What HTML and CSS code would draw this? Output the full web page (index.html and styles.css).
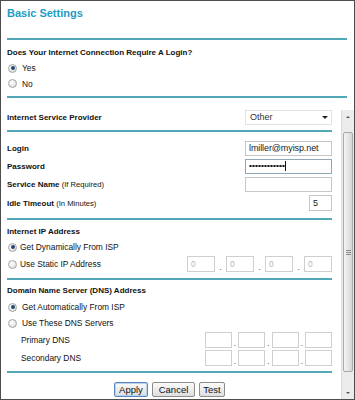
FILE: index.html
```html
<!DOCTYPE html>
<html lang="en">
<head>
    <meta charset="UTF-8">
    <meta name="viewport" content="width=device-width, initial-scale=1.0">
    <title>Basic Settings</title>
    <link rel="stylesheet" href="styles.css">
</head>
<body>
    <div class="frame">
        <div class="head">
            <h1 class="title">Basic Settings</h1>
            <div class="rule"></div>
            <div class="question">Does Your Internet Connection Require A Login?</div>
            <div class="opt opt-yes"><span class="radio on"></span>Yes</div>
            <div class="opt opt-no"><span class="radio"></span>No</div>
            <div class="rule rule-head"></div>
        </div>

        <div class="scroll">
            <div class="content">
                <div class="row row-isp">
                    <span class="label">Internet Service Provider</span>
                    <div class="select">Other<span class="caret"></span></div>
                </div>
                <div class="rule rule-isp"></div>

                <div class="account">
                    <div class="row row-field">
                        <span class="label">Login</span>
                        <div class="field">lmiller@myisp.net</div>
                    </div>
                    <div class="row row-field">
                        <span class="label">Password</span>
                        <div class="field focus"><span class="mask"></span><span class="cursor"></span></div>
                    </div>
                    <div class="row row-field row-tall">
                        <span class="label">Service Name <span class="note">(If Required)</span></span>
                        <div class="field"></div>
                    </div>
                    <div class="row row-field">
                        <span class="label">Idle Timeout <span class="note">(In Minutes)</span></span>
                        <div class="field field-short">5</div>
                    </div>
                </div>
                <div class="rule rule-account"></div>

                <div class="section-title sec-ip">Internet IP Address</div>
                <div class="opt opt-ip opt-16"><span class="radio on"></span>Get Dynamically From ISP</div>
                <div class="row opt-ip opt-18">
                    <span class="opt-inline"><span class="radio"></span>Use Static IP Address</span>
                    <div class="ip ip-wide">
                        <div class="octet">0</div><span class="dot">.</span>
                        <div class="octet">0</div><span class="dot">.</span>
                        <div class="octet">0</div><span class="dot">.</span>
                        <div class="octet">0</div>
                    </div>
                </div>
                <div class="rule rule-ip"></div>

                <div class="section-title sec-dns">Domain Name Server (DNS) Address</div>
                <div class="opt opt-18"><span class="radio on"></span>Get Automatically From ISP</div>
                <div class="opt opt-14"><span class="radio"></span>Use These DNS Servers</div>
                <div class="row row-dns">
                    <span class="dns-label">Primary DNS</span>
                    <div class="ip">
                        <div class="octet"></div><span class="dot">.</span>
                        <div class="octet"></div><span class="dot">.</span>
                        <div class="octet"></div><span class="dot">.</span>
                        <div class="octet"></div>
                    </div>
                </div>
                <div class="row row-dns row-dns2">
                    <span class="dns-label">Secondary DNS</span>
                    <div class="ip">
                        <div class="octet"></div><span class="dot">.</span>
                        <div class="octet"></div><span class="dot">.</span>
                        <div class="octet"></div><span class="dot">.</span>
                        <div class="octet"></div>
                    </div>
                </div>
                <div class="rule rule-dns"></div>

                <div class="buttons">
                    <button class="btn btn-apply">Apply</button>
                    <button class="btn btn-cancel">Cancel</button>
                    <button class="btn btn-test">Test</button>
                </div>
            </div>

            <!-- fake scrollbar drawn to match the screenshot -->
            <div class="scrollbar">
                <div class="sb-arrow up"></div>
                <div class="sb-thumb"><span class="grip"></span></div>
                <div class="sb-arrow down"></div>
            </div>
        </div>
    </div>
</body>
</html>
```

FILE: styles.css
```css
* {
    margin: 0;
    padding: 0;
    box-sizing: border-box;
}

body {
    font-family: 'Liberation Sans', Arial, sans-serif;
    color: #111;
    background: white;
}

.frame {
    width: 355px;
    height: 400px;
    border: 1px solid #4d4d4d;
    display: flex;
    flex-direction: column;
    overflow: hidden;
    background: white;
}

.head {
    padding: 0 7px 0 6px;
}

.title {
    height: 37px;
    padding-top: 5px;
    font-size: 11px;
    line-height: 14px;
    font-weight: bold;
    color: #1d9cc3;
}

.rule {
    height: 2px;
    background: #52a8b8;
}

.rule-head {
    margin-top: 5px;
}

.question {
    margin-top: 6px;
    height: 14px;
    line-height: 14px;
    font-size: 8px;
    font-weight: bold;
}

.opt,
.opt-inline {
    display: flex;
    align-items: center;
    gap: 5px;
    padding-left: 1px;
    font-size: 8.4px;
}

.opt-yes { height: 16px; }
.opt-no { height: 15px; }
.opt-14 { height: 14px; }
.opt-16 { height: 16px; }
.opt-18 { height: 18px; }

.opt-ip,
.opt-ip .opt-inline {
    gap: 3px;
}

.row.opt-ip {
    padding-left: 0;
}

.radio {
    width: 9px;
    height: 9px;
    border-radius: 50%;
    border: 1px solid #a5a5a5;
    background: radial-gradient(circle at 40% 35%, #ffffff 0%, #e6e6e6 60%, #cfcfcf 100%);
    display: flex;
    align-items: center;
    justify-content: center;
    flex: none;
}

.radio.on::after {
    content: '';
    width: 4px;
    height: 4px;
    border-radius: 50%;
    background: #24466f;
}

.scroll {
    flex: 1;
    display: flex;
    min-height: 0;
}

.content {
    flex: 1;
    padding: 11px 9px 0 6px;
}

.row {
    display: flex;
    justify-content: space-between;
    align-items: center;
}

.label {
    font-size: 8px;
    font-weight: bold;
}

.note {
    font-weight: normal;
    font-size: 7.6px;
}

.row-isp {
    height: 16px;
}

.select {
    width: 87px;
    height: 15px;
    border: 1px solid #e2e2e2;
    display: flex;
    align-items: center;
    justify-content: space-between;
    padding: 0 3px 0 4px;
    font-size: 9px;
    color: #333;
}

.caret {
    width: 0;
    height: 0;
    border-left: 3px solid transparent;
    border-right: 3px solid transparent;
    border-top: 3px solid #222;
}

.rule-isp {
    margin-top: 5px;
}

.account {
    margin-top: 7px;
}

.row-field {
    height: 18px;
}

.row-tall {
    height: 19px;
}

.field {
    width: 87px;
    height: 15px;
    border: 1px solid #c6c6c6;
    display: flex;
    align-items: center;
    padding: 0 3px;
    font-size: 9px;
    color: #222;
    letter-spacing: -0.1px;
}

.field.focus {
    border-color: #8da7b8;
}

.mask {
    width: 36px;
    height: 4px;
    background: radial-gradient(circle, #161616 0.9px, transparent 1.4px) 0 0 / 3px 4px repeat-x;
}

.cursor {
    width: 1px;
    height: 10px;
    background: #111;
}

.field-short {
    width: 23px;
    height: 16px;
}

.rule-account {
    margin-top: 6px;
}

.section-title {
    height: 14px;
    line-height: 14px;
    font-size: 8px;
    font-weight: bold;
}

.sec-ip {
    margin-top: 5px;
}

.sec-dns {
    margin-top: 4px;
}

.ip {
    display: flex;
    align-items: flex-end;
}

.octet {
    width: 27px;
    height: 16px;
    border: 1px solid #cfcfcf;
    font-size: 8.4px;
    color: #b5b5b5;
    padding-left: 3px;
    line-height: 14px;
}

.dot {
    width: 6.5px;
    text-align: center;
    font-size: 8px;
    line-height: 8px;
}

.ip-wide .octet {
    width: 28px;
}

.ip-wide .dot {
    width: 11px;
}

.rule-ip {
    margin-top: 5px;
}

.row-dns {
    margin-top: 1px;
    height: 17px;
}

.row-dns2 {
    margin-top: 1px;
}

.dns-label {
    padding-left: 14px;
    font-size: 8.4px;
}

.rule-dns {
    margin-top: 5px;
}

.buttons {
    margin-top: 9px;
    display: flex;
    justify-content: center;
    gap: 4px;
}

.btn {
    height: 15px;
    font-family: 'Liberation Sans', Arial, sans-serif;
    font-size: 9.5px;
    color: #111;
    background: linear-gradient(#fbfbfb, #dedede);
    border: 1px solid #8c8c8c;
    border-radius: 2px;
}

.btn-apply {
    width: 34px;
    border-color: #5b87c0;
    box-shadow: inset 0 0 0 1px #b9d2ee;
}

.btn-cancel {
    width: 43px;
}

.btn-test {
    width: 26px;
}

.scrollbar {
    width: 13px;
    margin-top: 12px;
    background: #ececec;
    border-left: 1px solid #dcdcdc;
    display: flex;
    flex-direction: column;
    align-items: center;
}

.sb-arrow {
    width: 100%;
    height: 14px;
    display: flex;
    align-items: center;
    justify-content: center;
}

.sb-arrow::after {
    content: '';
    border-left: 2px solid transparent;
    border-right: 2px solid transparent;
}

.sb-arrow.up::after {
    border-bottom: 2px solid #555;
}

.sb-arrow.down {
    margin-top: auto;
    height: 13px;
}

.sb-arrow.down::after {
    border-top: 2px solid #555;
}

.sb-thumb {
    margin-top: 8px;
    width: 10px;
    height: 240px;
    border: 1px solid #a9a9a9;
    border-radius: 2px;
    background: linear-gradient(to right, #f4f4f4, #d6d6d6);
    display: flex;
    align-items: center;
    justify-content: center;
}

.grip {
    width: 5px;
    height: 5px;
    background: repeating-linear-gradient(#8a8a8a 0 1px, transparent 1px 2px);
}
```
